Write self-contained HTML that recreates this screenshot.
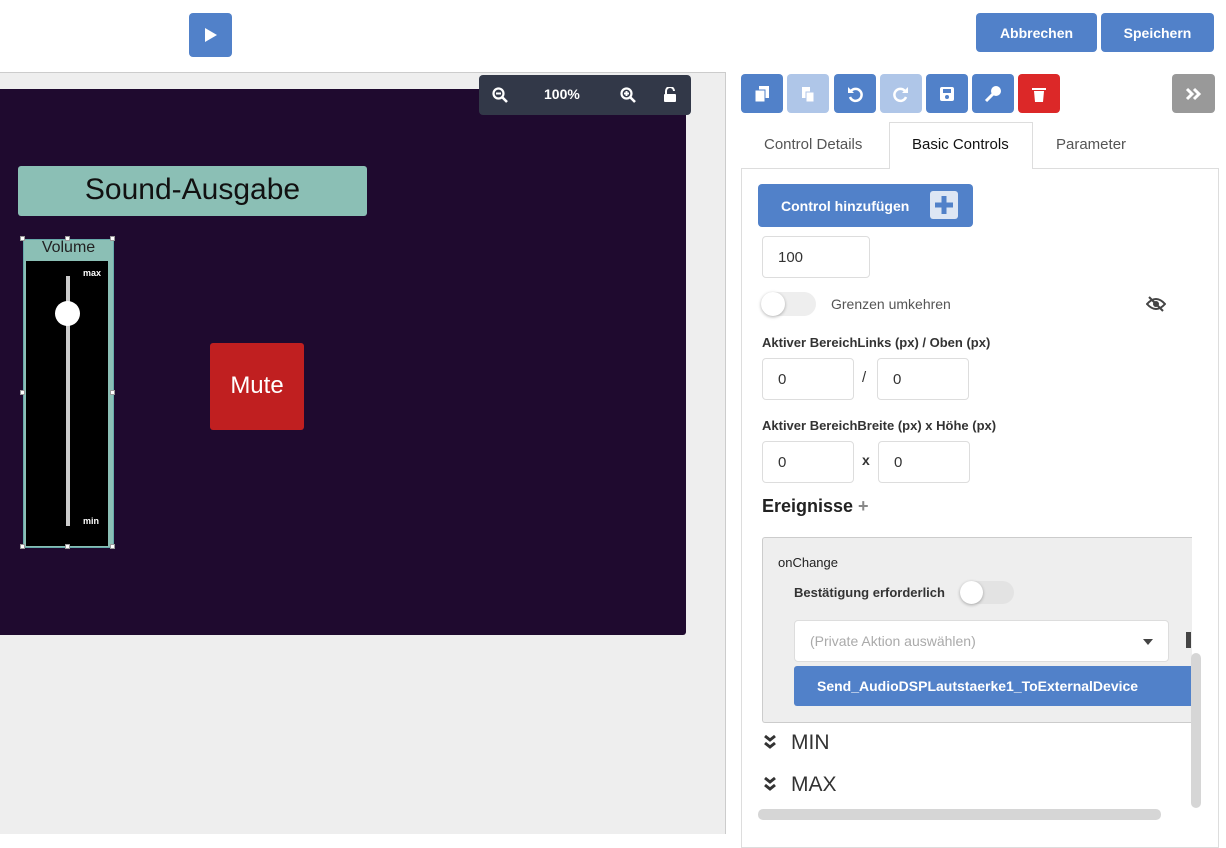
<!DOCTYPE html>
<html><head><meta charset="utf-8"><style>
*{box-sizing:border-box;margin:0;padding:0}
body{width:1226px;height:834px;overflow:hidden;background:#fff;font-family:"Liberation Sans",sans-serif;position:relative;color:#333}
.a{position:absolute}
.btn{position:absolute;background:#5181c9;border-radius:4px;color:#fff;font-weight:bold;font-size:14px;display:flex;align-items:center;justify-content:center}
.tb{position:absolute;top:74px;width:42px;height:39px;border-radius:4px;background:#5181c9;display:flex;align-items:center;justify-content:center}
.inp{position:absolute;border:1px solid #ddd;border-radius:4px;background:#fff;font-size:15px;color:#333;padding-left:15px;display:flex;align-items:center}
.lbl{position:absolute;font-size:13px;font-weight:bold;color:#333}
.h{position:absolute;width:5px;height:5px;background:#fff;border:1px solid #999}
</style></head><body>
<div class="btn" style="left:189px;top:13px;width:43px;height:44px"><svg width="14" height="16"><path d="M1 1L13 8L1 15Z" fill="#fff"/></svg></div>
<div class="btn" style="left:976px;top:13px;width:121px;height:39px">Abbrechen</div>
<div class="btn" style="left:1101px;top:13px;width:113px;height:39px">Speichern</div>

<div class="a" style="left:0;top:72px;width:726px;height:762px;background:#eee;border-top:1px solid #ccc;border-right:1px solid #ccc"></div>
<div class="a" style="left:0;top:89px;width:686px;height:546px;background:#1f0a2f;border-radius:0 0 3px 0"></div>
<div class="a" style="left:479px;top:75px;width:212px;height:40px;background:#323848;border-radius:4px;color:#fff;font-weight:bold;font-size:14px">
<svg class="a" style="left:13px;top:12px" width="16" height="16"><circle cx="6.5" cy="6.5" r="5" stroke="#fff" stroke-width="2.2" fill="none"/><path d="M10 10L15 15" stroke="#fff" stroke-width="2.6"/><path d="M4 6.5H9" stroke="#fff" stroke-width="2"/></svg>
<span class="a" style="left:65px;top:11px">100%</span>
<svg class="a" style="left:141px;top:12px" width="16" height="16"><circle cx="6.5" cy="6.5" r="5" stroke="#fff" stroke-width="2.2" fill="none"/><path d="M10 10L15 15" stroke="#fff" stroke-width="2.6"/><path d="M4 6.5H9M6.5 4V9" stroke="#fff" stroke-width="2"/></svg>
<svg class="a" style="left:184px;top:12px" width="14" height="16"><path d="M3 7V4a4 4 0 0 1 8 0" stroke="#fff" stroke-width="2" fill="none"/><rect x="1" y="7" width="12" height="8" rx="1" fill="#fff"/></svg>
</div>
<div class="a" style="left:18px;top:166px;width:349px;height:50px;background:#8bbfb5;border-radius:3px;font-size:30px;color:#111;text-align:center;line-height:48px">Sound-Ausgabe</div>
<div class="a" style="left:23px;top:239px;width:91px;height:309px;background:#8bbfb5;border:1px solid #6aa;"></div>
<div class="a" style="left:23px;top:239px;width:91px;height:22px;text-align:center;font-size:16px;color:#222">Volume</div>
<div class="a" style="left:26px;top:261px;width:82px;height:285px;background:#000"></div>
<div class="a" style="left:66px;top:276px;width:4px;height:250px;background:#ccc"></div>
<div class="a" style="left:55px;top:301px;width:25px;height:25px;border-radius:50%;background:#fff"></div>
<div class="a" style="left:83px;top:268px;font-size:9px;color:#fff;font-weight:bold">max</div>
<div class="a" style="left:83px;top:516px;font-size:9px;color:#fff;font-weight:bold">min</div>
<div class="h" style="left:20px;top:236px"></div><div class="h" style="left:65px;top:236px"></div><div class="h" style="left:110px;top:236px"></div>
<div class="h" style="left:20px;top:390px"></div><div class="h" style="left:110px;top:390px"></div>
<div class="h" style="left:20px;top:544px"></div><div class="h" style="left:65px;top:544px"></div><div class="h" style="left:110px;top:544px"></div>
<div class="a" style="left:210px;top:343px;width:94px;height:87px;background:#c01f20;border-radius:3px;color:#fff;font-size:24px;text-align:center;line-height:86px">Mute</div>

<div class="tb" style="left:741px"><svg width="16" height="18"><rect x="5" y="1" width="10" height="12" fill="#fff"/><rect x="1" y="5" width="10" height="12" fill="#fff" stroke="#5181c9"/></svg></div>
<div class="tb" style="left:787px;background:#afc6e8"><svg width="16" height="18"><rect x="2" y="2" width="8" height="11" fill="#fff"/><rect x="6" y="7" width="8" height="10" fill="#fff" stroke="#afc6e8"/></svg></div>
<div class="tb" style="left:834px"><svg width="18" height="18"><path d="M5 6A6 6 0 1 1 4 12" stroke="#fff" stroke-width="2.5" fill="none"/><path d="M2 2V8H8Z" fill="#fff"/></svg></div>
<div class="tb" style="left:880px;background:#afc6e8"><svg width="18" height="18"><path d="M13 6A6 6 0 1 0 14 12" stroke="#fff" stroke-width="2.5" fill="none"/><path d="M16 2V8H10Z" fill="#fff"/></svg></div>
<div class="tb" style="left:926px"><svg width="16" height="16"><rect x="1" y="1" width="14" height="14" rx="2" fill="#fff"/><rect x="4" y="3" width="8" height="4" fill="#5181c9"/><circle cx="8" cy="11" r="2" fill="#5181c9"/></svg></div>
<div class="tb" style="left:972px"><svg width="18" height="18"><circle cx="12" cy="6" r="5" fill="#fff"/><path d="M9 9L2 16" stroke="#fff" stroke-width="3"/></svg></div>
<div class="tb" style="left:1018px;background:#dc2828"><svg width="14" height="16"><rect x="0" y="2" width="14" height="2" fill="#fff"/><path d="M2 5H12L11 16H3Z" fill="#fff"/></svg></div>
<div class="tb" style="left:1172px;width:43px;background:#999"><svg width="18" height="14"><path d="M2 2L7 7L2 12M9 2L14 7L9 12" stroke="#fff" stroke-width="3" fill="none"/></svg></div>

<div class="a" style="left:741px;top:168px;width:478px;height:680px;border:1px solid #ddd"></div>
<div class="a" style="left:889px;top:122px;width:144px;height:47px;border:1px solid #ddd;border-bottom:none;background:#fff"></div>
<div class="a" style="left:764px;top:136px;font-size:15px;color:#555">Control Details</div>
<div class="a" style="left:912px;top:136px;font-size:15px;color:#111">Basic Controls</div>
<div class="a" style="left:1056px;top:136px;font-size:15px;color:#555">Parameter</div>

<div class="btn" style="left:758px;top:184px;width:215px;height:43px;justify-content:flex-start;padding-left:23px">Control hinzufügen
<span class="a" style="left:172px;top:7px;width:28px;height:28px;background:#dde6f4;border-radius:3px"><svg width="28" height="28"><path d="M14 5V23M5 14H23" stroke="#5181c9" stroke-width="5"/></svg></span></div>
<div class="inp" style="left:762px;top:236px;width:108px;height:42px">100</div>
<div class="a" style="left:761px;top:292px;width:55px;height:24px;border-radius:12px;background:#eee"></div>
<div class="a" style="left:761px;top:292px;width:24px;height:24px;border-radius:50%;background:#fff;box-shadow:0 1px 3px rgba(0,0,0,.3)"></div>
<div class="a" style="left:831px;top:296px;font-size:14px;color:#555">Grenzen umkehren</div>
<svg class="a" style="left:1146px;top:296px" width="20" height="16"><path d="M1 8Q10 -2 19 8Q10 18 1 8Z" stroke="#444" stroke-width="2" fill="none"/><circle cx="10" cy="8" r="3" fill="#444"/><path d="M3 1L17 15" stroke="#444" stroke-width="2"/></svg>
<div class="lbl" style="left:762px;top:335px">Aktiver BereichLinks (px) / Oben (px)</div>
<div class="inp" style="left:762px;top:358px;width:92px;height:42px">0</div>
<div class="a" style="left:862px;top:369px;font-size:15px">/</div>
<div class="inp" style="left:877px;top:358px;width:92px;height:42px">0</div>
<div class="lbl" style="left:762px;top:418px">Aktiver BereichBreite (px) x Höhe (px)</div>
<div class="inp" style="left:762px;top:441px;width:92px;height:42px">0</div>
<div class="a" style="left:862px;top:452px;font-size:14px;font-weight:bold">x</div>
<div class="inp" style="left:878px;top:441px;width:92px;height:42px">0</div>
<div class="a" style="left:762px;top:496px;font-size:18px;font-weight:bold;color:#222">Ereignisse <span style="color:#888">+</span></div>

<div class="a" style="left:762px;top:537px;width:430px;height:186px;background:#eee;border:1px solid #ccc;border-right:none;border-radius:3px 0 0 3px"></div>
<div class="a" style="left:778px;top:555px;font-size:13px;color:#222">onChange</div>
<div class="a" style="left:794px;top:585px;font-size:13px;font-weight:bold;color:#333">Bestätigung erforderlich</div>
<div class="a" style="left:960px;top:581px;width:54px;height:23px;border-radius:12px;background:#e3e3e3"></div>
<div class="a" style="left:960px;top:581px;width:23px;height:23px;border-radius:50%;background:#fff;box-shadow:0 1px 3px rgba(0,0,0,.3)"></div>
<div class="inp" style="left:794px;top:620px;width:375px;height:42px;color:#aaa;font-size:14px">(Private Aktion auswählen)<svg class="a" style="left:348px;top:18px" width="10" height="6"><path d="M0 0H10L5 6Z" fill="#444"/></svg></div>
<div class="a" style="left:1186px;top:632px;width:5px;height:16px;background:#444"></div>
<div class="a" style="left:794px;top:666px;width:398px;height:40px;background:#5181c9;border-radius:3px 0 0 3px;color:#fff;font-weight:bold;font-size:14px;padding-left:23px;line-height:40px">Send_AudioDSPLautstaerke1_ToExternalDevice</div>
<div class="a" style="left:1191px;top:653px;width:10px;height:155px;background:#d6d6d6;border-radius:5px"></div>
<div class="a" style="left:758px;top:809px;width:403px;height:11px;background:#d6d6d6;border-radius:5px"></div>
<svg class="a" style="left:763px;top:734px" width="14" height="16"><path d="M2 2L7 6L12 2M2 9L7 13L12 9" stroke="#333" stroke-width="3" fill="none"/></svg>
<div class="a" style="left:791px;top:731px;font-size:21px;color:#333">MIN</div>
<svg class="a" style="left:763px;top:776px" width="14" height="16"><path d="M2 2L7 6L12 2M2 9L7 13L12 9" stroke="#333" stroke-width="3" fill="none"/></svg>
<div class="a" style="left:791px;top:773px;font-size:21px;color:#333">MAX</div>
</body></html>
